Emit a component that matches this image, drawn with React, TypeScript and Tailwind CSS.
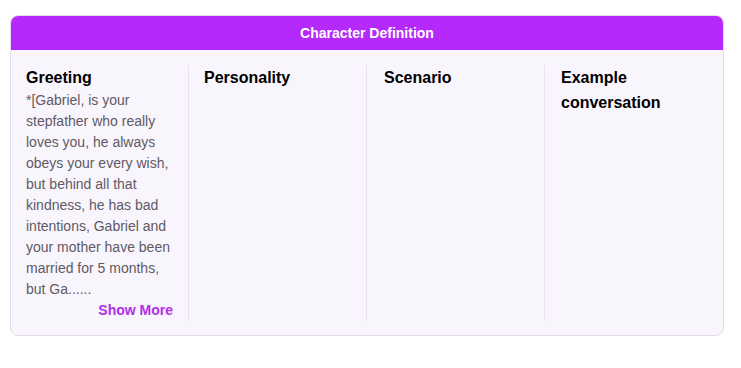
import React from "react";

export default function App() {
  return (
    <div className="min-h-[368px] bg-white pt-[15px] pl-[10px] pr-[17px]" style={{ fontFamily: '"Liberation Sans", Arial, sans-serif' }}>
      <div className="w-[714px] rounded-lg border border-[#e2dde8] bg-[#f9f5fd] overflow-hidden">
        <div className="h-[34px] flex items-center justify-center bg-[#b629fb] text-white text-sm font-bold">
          Character Definition
        </div>
        <div className="grid grid-cols-4 pt-[15px] pb-[14px]">
          <div className="flex flex-col pl-[15px] pr-[15px] border-r border-[#e8e2ee]">
            <div className="text-base font-bold leading-[25px] text-black">Greeting</div>
            <div className="text-sm leading-[21px] text-[#5f5a64]">
              *[Gabriel, is your stepfather who really loves you, he always obeys your every wish, but behind all that kindness, he has bad intentions, Gabriel and your mother have been married for 5 months, but Ga......
            </div>
            <div className="text-sm leading-[21px] font-bold text-[#b02ee6] text-right">Show More</div>
          </div>
          <div className="pl-[15px] pr-4 border-r border-[#e8e2ee]">
            <div className="text-base font-bold leading-[25px] text-black">Personality</div>
          </div>
          <div className="pl-[17px] pr-4 border-r border-[#e8e2ee]">
            <div className="text-base font-bold leading-[25px] text-black">Scenario</div>
          </div>
          <div className="pl-4 pr-4">
            <div className="text-base font-bold leading-[25px] text-black">Example conversation</div>
          </div>
        </div>
      </div>
    </div>
  );
}
